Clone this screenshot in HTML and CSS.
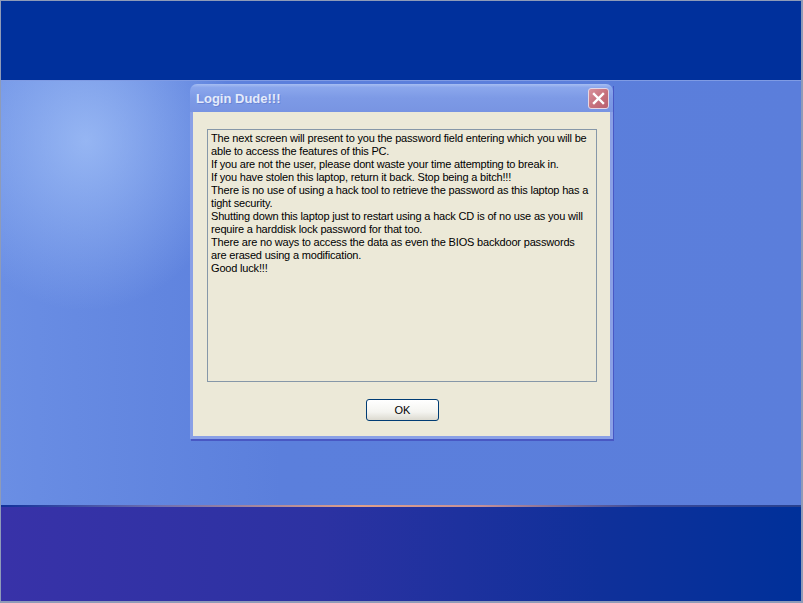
FILE: index.html
```html
<!DOCTYPE html>
<html lang="en">
<head>
  <meta charset="UTF-8" />
  <title>Login Dude!!!</title>
  <link rel="stylesheet" href="styles.css">
</head>
<body>

  <div class="screen">
    <div class="top-band"></div>

    <div class="desk">
      <div class="dialog">
        <div class="titlebar">
          <span class="title">Login Dude!!!</span>
          <button class="close" aria-label="Close">
            <svg width="13" height="13" viewBox="0 0 13 13">
              <path d="M2 2 L11 11 M11 2 L2 11" stroke="#fff" stroke-width="2.4" stroke-linecap="square" />
            </svg>
          </button>
        </div>
        <div class="content">
          <div class="message">
            The next screen will present to you the password field entering which you will be<br>
            able to access the features of this PC.<br>
            If you are not the user, please dont waste your time attempting to break in.<br>
            If you have stolen this laptop, return it back. Stop being a bitch!!!<br>
            There is no use of using a hack tool to retrieve the password as this laptop has a<br>
            tight security.<br>
            Shutting down this laptop just to restart using a hack CD is of no use as you will<br>
            require a harddisk lock password for that too.<br>
            There are no ways to access the data as even the BIOS backdoor passwords<br>
            are erased using a modification.<br>
            Good luck!!!
          </div>
          <div class="actions">
            <button class="ok">OK</button>
          </div>
        </div>
      </div>
    </div>

    <div class="bottom-band"></div>
  </div>

</body>
</html>
```

FILE: styles.css
```css
html, body {
  margin: 0;
  background: #8e9bb8;
}
.screen {
  width: 800px;
  height: 600px;
  margin: 1px 2px 2px 1px;
  display: flex;
  flex-direction: column;
  overflow: hidden;
}
.top-band {
  height: 79px;
  background: #00309c;
}
.desk {
  flex: 1;
  display: flex;
  justify-content: center;
  align-items: flex-start;
  padding-top: 3px;
  background:
    radial-gradient(ellipse 150px 170px at 85px 60px, rgba(170, 200, 250, 0.7), rgba(170, 200, 250, 0) 100%),
    linear-gradient(90deg, #6a8ee4 0%, #5b7fdc 35%, #5b7edb 100%);
  border-top: 1px solid #7f9be4;
}
.bottom-band {
  height: 94px;
  background: linear-gradient(90deg, #3832a8 0%, #2c32a2 40%, #0f309a 75%, #00309a 100%);
  border-top: 2px solid;
  border-image: linear-gradient(90deg, #10309a 0%, #7070b0 20%, #e0a088 45%, #c49098 60%, #3a4a9a 80%, #28408e 100%) 1;
}

.dialog {
  width: 423px;
  margin-left: 1px;
  box-shadow: 1px 2px 0 #4858c4;
}
.titlebar {
  height: 28px;
  display: flex;
  align-items: center;
  justify-content: space-between;
  padding: 0 4px 0 6px;
  border-radius: 7px 7px 0 0;
  background: linear-gradient(180deg, #a7bef2 0%, #8ba7ec 12%, #7d9ae6 50%, #7894e2 100%);
}
.title {
  font-family: "Liberation Sans", Arial, sans-serif;
  font-weight: bold;
  font-size: 13px;
  color: #e4ebfb;
  text-shadow: 1px 1px 0 #6a84d4;
  padding-top: 1px;
}
.close {
  width: 21px;
  height: 21px;
  padding: 0;
  display: flex;
  align-items: center;
  justify-content: center;
  border: 1px solid #e6d6e4;
  border-radius: 3px;
  background: linear-gradient(135deg, #d8929c 0%, #c6707c 55%, #b85f70 100%);
}
.content {
  background: #ece9d8;
  border: 3px solid #8aa0e6;
  border-top: none;
  padding: 17px 13px 15px 14px;
}
.message {
  height: 247px;
  border: 1px solid #8697a8;
  padding: 2px 3px;
  font-family: "Liberation Sans", Arial, sans-serif;
  font-size: 11px;
  line-height: 13px;
  letter-spacing: -0.18px;
  color: #000;
  white-space: nowrap;
  background: #ece9d8;
}
.actions {
  display: flex;
  justify-content: center;
  padding-top: 17px;
}
.ok {
  width: 73px;
  height: 22px;
  border: 1px solid #003c74;
  border-radius: 3px;
  background: linear-gradient(180deg, #ffffff 0%, #f4f4f0 60%, #dcdad0 100%);
  font-family: "Liberation Sans", Arial, sans-serif;
  font-size: 11px;
  color: #000;
  padding: 0;
  margin-left: 1px;
}
```
